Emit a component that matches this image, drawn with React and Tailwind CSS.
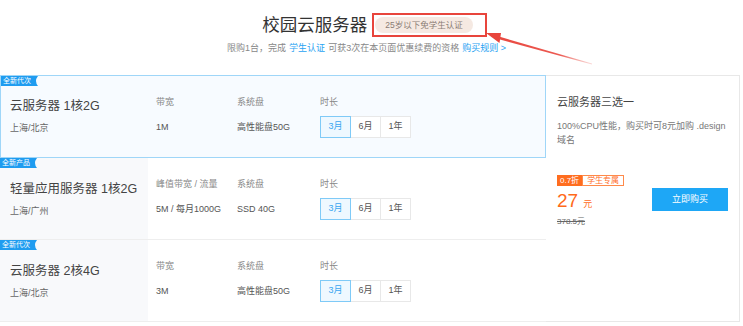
import React from "react";

const font = "font-['Liberation_Sans','Noto_Sans_CJK_SC',sans-serif]";

function Tag({ text }) {
  return (
    <div className="absolute left-0 top-0 flex h-[10px] items-center">
      <div className="flex h-[10px] items-center bg-[#1f9cf0] pl-[2px] pr-[2px] text-[7px] leading-[10px] text-white">
        {text}
      </div>
      <svg width="6" height="10" viewBox="0 0 6 10" className="block">
        <path d="M0 0 H5 Q1 5 5 10 H0 Z" fill="#1f9cf0" />
      </svg>
    </div>
  );
}

function Durations() {
  return (
    <div className="mt-[7px] flex text-[9px]">
      <div className="flex h-[22px] w-[31px] items-center justify-center border border-[#7fcaf7] bg-[#eef8ff] text-[#3aa6f0]">
        3月
      </div>
      <div className="flex h-[22px] w-[30px] items-center justify-center border border-l-0 border-[#e8e8e8] bg-white text-[#555]">
        6月
      </div>
      <div className="flex h-[22px] w-[30px] items-center justify-center border border-l-0 border-[#e8e8e8] bg-white text-[#555]">
        1年
      </div>
    </div>
  );
}

function Row({ tag, name, place, label1, value1, value2, active }) {
  return (
    <div
      className={
        active
          ? "relative flex h-[83px] border border-[#9fd6f8] bg-[#f7fbff]"
          : "relative flex h-[82px] border-b border-[#eeeeee] bg-white"
      }
    >
      <Tag text={tag} />
      <div
        className={
          active
            ? "w-[147px] pl-[9px] pt-[21px]"
            : "w-[148px] bg-[#f8f9fb] pl-[10px] pt-[22px]"
        }
      >
        <div className="whitespace-nowrap text-[12.5px] leading-[18px] text-[#444]">{name}</div>
        <div className="mt-[6px] text-[9px] leading-[14px] text-[#666]">{place}</div>
      </div>
      <div className="w-[89px] pl-[8px] pt-[19px] text-[9px] leading-[14px]">
        <div className="whitespace-nowrap text-[#888]">{label1}</div>
        <div className="mt-[11px] whitespace-nowrap text-[#555]">{value1}</div>
      </div>
      <div className="w-[83px] pt-[19px] text-[9px] leading-[14px]">
        <div className="text-[#888]">系统盘</div>
        <div className="mt-[11px] whitespace-nowrap text-[#555]">{value2}</div>
      </div>
      <div className="pt-[19px]">
        <div className="text-[9px] leading-[14px] text-[#888]">时长</div>
        <Durations />
      </div>
    </div>
  );
}

function App() {
  return (
    <div className={`relative h-[326px] w-[743px] overflow-hidden bg-white ${font}`}>
      {/* header */}
      <div className="w-[739px] pt-[13px]">
        <div className="flex items-center justify-center pr-[4px]">
          <div className="text-[17.5px] leading-[24px] text-[#333]">校园云服务器</div>
          <div className="relative ml-[8px]">
            <div className="flex h-[16px] items-center rounded-full bg-[#f5e9e2] px-[10px] text-[8.5px] text-[#8a7c74]">
              25岁以下免学生认证
            </div>
            <div className="absolute -bottom-[4px] -left-[3px] -right-[14px] -top-[4px] border-2 border-[#e8453c]"></div>
          </div>
        </div>
        <div className="mt-[4px] flex justify-center pr-[6px] text-[9px] leading-[14px] text-[#888]">
          <span>限购1台，完成 </span>
          <span className="mx-[3px] text-[#2aa3f2]">学生认证</span>
          <span> 可获3次在本页面优惠续费的资格 </span>
          <span className="ml-[3px] text-[#2aa3f2]">购买规则 &gt;</span>
        </div>
      </div>

      {/* arrow */}
      <svg className="absolute left-0 top-0" width="743" height="100" viewBox="0 0 743 100">
        <defs>
          <linearGradient id="ar" x1="486" y1="33" x2="592" y2="64" gradientUnits="userSpaceOnUse">
            <stop offset="0" stopColor="#e8453c" />
            <stop offset="0.7" stopColor="#ec5a52" />
            <stop offset="1" stopColor="#f2a09b" stopOpacity="0.4" />
          </linearGradient>
        </defs>
        <polygon points="486,33 501,33 499.5,43" fill="#e8453c" />
        <polygon points="499,36.6 500,39.6 592,64.4 592,63.6" fill="url(#ar)" />
      </svg>

      {/* content */}
      <div className="mt-[20px] flex w-[740px]">
        <div className="w-[546px]">
          <Row
            active
            tag="全新代次"
            name="云服务器 1核2G"
            place="上海/北京"
            label1="带宽"
            value1="1M"
            value2="高性能盘50G"
          />
          <Row
            tag="全新产品"
            name="轻量应用服务器 1核2G"
            place="上海/广州"
            label1="峰值带宽 / 流量"
            value1="5M / 每月1000G"
            value2="SSD 40G"
          />
          <Row
            tag="全新代次"
            name="云服务器 2核4G"
            place="上海/北京"
            label1="带宽"
            value1="3M"
            value2="高性能盘50G"
          />
        </div>
        <div className="h-[247px] flex-1 border border-l-0 border-[#e8e8e8] pl-[11px] pr-[11px] pt-[18px]">
          <div className="text-[11px] leading-[16px] text-[#444]">云服务器三选一</div>
          <div className="mt-[9px] text-[9px] leading-[14px] text-[#777]">
            100%CPU性能，购买时可8元加购 .design
            <br />
            域名
          </div>
          <div className="mt-[28px] flex items-start justify-between">
            <div>
              <div className="flex h-[11px] text-[8px] leading-[9px]">
                <div className="flex items-center bg-[#ff6d1f] px-[3px] text-white">0.7折</div>
                <div className="flex items-center border border-[#ff8a4a] px-[4px] text-[#ff6d1f]">学生专属</div>
              </div>
              <div className="mt-[4px] flex items-baseline leading-[22px] text-[#ff6a1a]">
                <span className="text-[19px]">27</span>
                <span className="ml-[5px] text-[9px]">元</span>
              </div>
              <div className="mt-[1px] text-[8px] leading-[12px] text-[#666] line-through">378.5元</div>
            </div>
            <div className="mt-[13px] flex h-[23px] w-[76px] items-center justify-center bg-[#1ea7f6] text-[9px] text-white">
              立即购买
            </div>
          </div>
        </div>
      </div>
    </div>
  );
}

export default App;
